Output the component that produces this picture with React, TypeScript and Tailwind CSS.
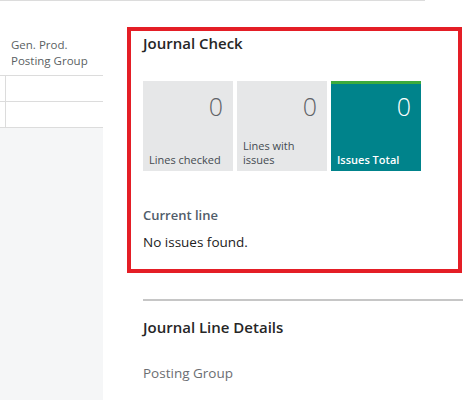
import React from "react";

function Tile({ value, label, teal }: { value: string; label: React.ReactNode; teal?: boolean }) {
  return (
    <div
      className={
        "w-[90px] h-[90px] flex flex-col justify-between " +
        (teal ? "bg-[#00838b] border-t-[3px] border-[#3dab3d]" : "bg-[#e6e7e8]")
      }
    >
      <div
        className={
          "text-right pr-[10px] text-[25px] font-light leading-[30px] " +
          (teal ? "pt-[7px] text-white" : "pt-[10px] text-[#5f6367]")
        }
      >
        {value}
      </div>
      <div
        className={
          "pl-[6px] pb-[4px] text-[11px] leading-[14px] " +
          (teal ? "text-white font-semibold" : "text-[#444a50]")
        }
      >
        {label}
      </div>
    </div>
  );
}

export default function App() {
  return (
    <div className="w-[475px] h-[400px] bg-white overflow-hidden font-['Open_Sans',sans-serif] flex flex-col">
      <div className="h-px w-[425px] bg-[#dcdcdc] shrink-0" />
      <div className="flex flex-1 min-h-0">
        <div className="w-[103px] shrink-0 flex flex-col">
          <div className="pt-[36px] pl-[11px] pb-[6px] text-[11.5px] leading-[16px] text-[#5b5f63] border-b border-[#dcdcdc]">
            Gen. Prod.
            <br />
            Posting Group
          </div>
          <div className="flex h-[26px] border-b border-[#dcdcdc]">
            <div className="w-[6px] border-r border-[#dcdcdc]" />
          </div>
          <div className="flex h-[26px] border-b border-[#dcdcdc]">
            <div className="w-[6px] border-r border-[#dcdcdc]" />
          </div>
          <div className="flex-1 bg-[#f5f6f7]" />
        </div>
        <div className="pl-[24px] pt-[26px]">
          <div className="w-[335px] h-[246px] border-4 border-[#e41e26] pl-[12px] pt-[2px]">
            <div className="text-[15px] leading-[20px] font-semibold text-[#262626]">Journal Check</div>
            <div className="mt-[28px] flex gap-[4px]">
              <Tile value="0" label="Lines checked" />
              <Tile
                value="0"
                label={
                  <>
                    Lines with
                    <br />
                    issues
                  </>
                }
              />
              <Tile value="0" label="Issues Total" teal />
            </div>
            <div className="mt-[35px] text-[13px] leading-[18px] font-semibold text-[#505c6a]">Current line</div>
            <div className="mt-[9px] text-[13.5px] leading-[18px] text-[#212121]">No issues found.</div>
          </div>
          <div className="ml-[16px] mt-[26px] w-[320px] h-[2px] bg-[#c6c6c6]" />
          <div className="ml-[16px] mt-[16px] text-[15px] leading-[20px] font-semibold text-[#262626]">
            Journal Line Details
          </div>
          <div className="ml-[16px] mt-[27px] text-[13.5px] leading-[18px] text-[#6b6e72]">Posting Group</div>
        </div>
      </div>
    </div>
  );
}
